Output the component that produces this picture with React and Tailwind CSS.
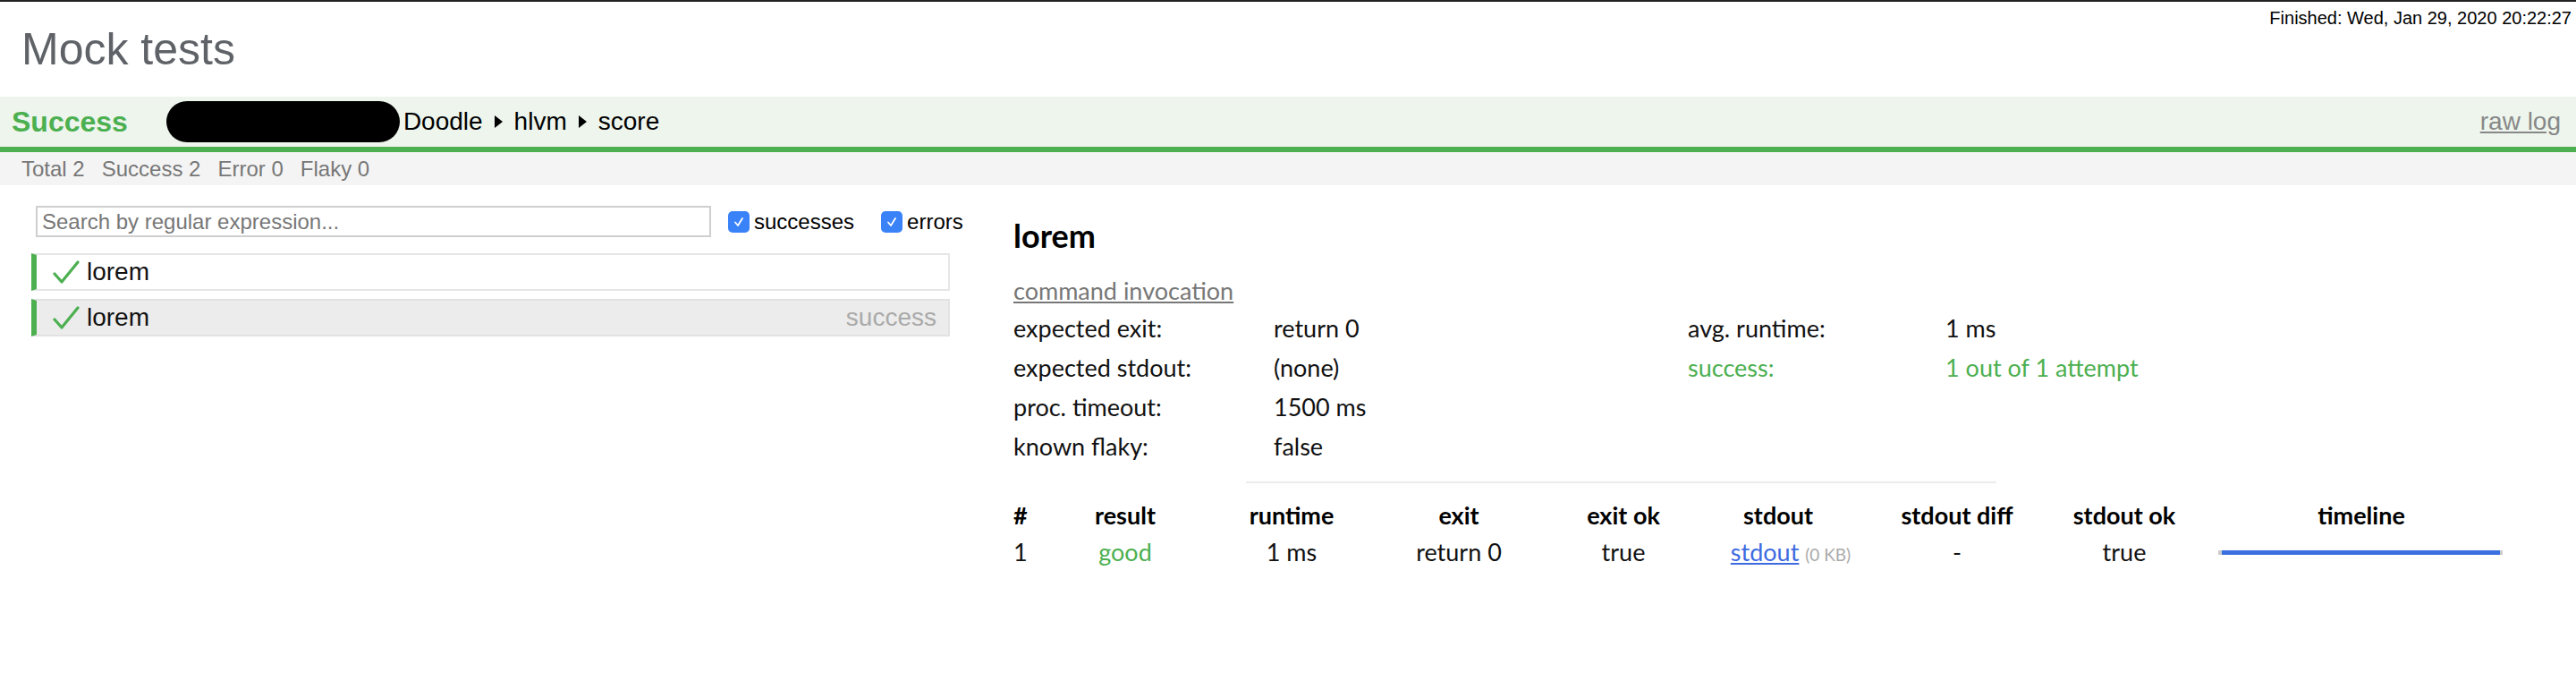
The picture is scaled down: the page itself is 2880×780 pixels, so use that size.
import React from 'react';

const GREEN = 'text-[#4caf50]';

const TickIcon = () => (
  <svg width="30" height="27" viewBox="0 0 30 27" fill="none">
    <path d="M2 15 L10 24 L28 2" stroke="#4caf50" strokeWidth="3.2" strokeLinecap="round" strokeLinejoin="round" />
  </svg>
);

const Caret = () => (
  <svg width="9" height="14" viewBox="0 0 9 14" className="mx-[13px]">
    <path d="M0 0 L9 7 L0 14 Z" fill="#000" />
  </svg>
);

const Checkbox = ({ label, className }) => (
  <label className={`flex items-center ${className || ''}`}>
    <span className="flex h-[24px] w-[24px] items-center justify-center rounded-[5px] bg-[#3a82f7]">
      <svg width="14" height="14" viewBox="0 0 14 14" fill="none">
        <path d="M3 7.5 L6 11 L11 3" stroke="#fff" strokeWidth="1.8" strokeLinecap="round" strokeLinejoin="round" />
      </svg>
    </span>
    <span className="ml-[5px] text-[24px] leading-[28px] text-black">{label}</span>
  </label>
);

const TestRow = ({ name, status, selected }) => (
  <div
    className={`flex h-[42px] w-[1027px] items-center border-2 border-l-[6px] border-l-[#4caf50] pl-[18px] pr-[13px] ${
      selected ? 'border-[#e2e2e2] bg-[#ececec]' : 'border-[#e6e6e6] bg-white'
    }`}
  >
    <TickIcon />
    <span className="ml-[8px] text-[28px] leading-[32px] text-[#111]">{name}</span>
    {status && <span className="ml-auto text-[28px] leading-[32px] text-[#aaa]">{status}</span>}
  </div>
);

const infoRows = [
  ['expected exit:', 'return 0', 'avg. runtime:', '1 ms', false],
  ['expected stdout:', '(none)', 'success:', '1 out of 1 attempt', true],
  ['proc. timeout:', '1500 ms', '', '', false],
  ['known flaky:', 'false', '', '', false],
];

const columns = ['#', 'result', 'runtime', 'exit', 'exit ok', 'stdout', 'stdout diff', 'stdout ok', 'timeline'];

export default function App() {
  return (
    <div className="min-h-[780px] w-[2880px] border-t-2 border-[#222] bg-white font-['Liberation_Sans',Arial,sans-serif]">
      {/* title */}
      <div className="relative h-[106px]">
        <h1 className="pl-[24px] pt-[24px] text-[50px] leading-[58px] text-[#5f6368]">Mock tests</h1>
        <div className="absolute right-[5px] top-[6px] text-[20px] leading-[24px] text-black">
          Finished: Wed, Jan 29, 2020 20:22:27
        </div>
      </div>

      {/* status bar */}
      <div className="flex h-[62px] items-center border-b-[6px] border-[#4caf50] bg-[#edf5ed] pl-[13px] pr-[17px]">
        <span className={`text-[32px] font-bold leading-[36px] ${GREEN}`}>Success</span>
        <span className="ml-[43px] h-[46px] w-[261px] rounded-full bg-black" />
        <div className="ml-[4px] flex items-center text-[28px] leading-[32px] text-black">
          <span>Doodle</span>
          <Caret />
          <span>hlvm</span>
          <Caret />
          <span>score</span>
        </div>
        <a className="ml-auto text-[28px] leading-[32px] text-[#888] underline">raw log</a>
      </div>

      {/* counters */}
      <div className="flex h-[37px] items-center gap-[19px] bg-[#f4f4f4] pl-[24px] text-[24px] leading-[28px] text-[#777]">
        <span>Total 2</span>
        <span>Success 2</span>
        <span>Error 0</span>
        <span>Flaky 0</span>
      </div>

      <div className="flex">
        {/* test list */}
        <div className="w-[1133px] shrink-0 pl-[35px] pt-[23px]">
          <div className="flex items-center">
            <div className="ml-[5px] flex h-[35px] w-[755px] items-center border-2 border-[#cfcfcf] pl-[5px] text-[24px] text-[#777]">
              Search by regular expression...
            </div>
            <Checkbox label="successes" className="ml-[19px]" />
            <Checkbox label="errors" className="ml-[30px]" />
          </div>
          <div className="mt-[18px] flex flex-col gap-[9px]">
            <TestRow name="lorem" />
            <TestRow name="lorem" status="success" selected />
          </div>
        </div>

        {/* details */}
        <div className="flex-1 pt-[34px] font-['Lato',sans-serif] text-[#111]">
          <h2 className="text-[36px] font-bold leading-[44px] text-black">lorem</h2>
          <a className="mt-[20px] block w-fit text-[27px] leading-[40px] text-[#777] underline">command invocation</a>
          <div className="grid grid-cols-[291px_463px_288px_auto] text-[27px] leading-[44px]">
            {infoRows.map(([k1, v1, k2, v2, ok], i) => (
              <React.Fragment key={i}>
                <span>{k1}</span>
                <span>{v1}</span>
                <span className={ok ? GREEN : ''}>{k2}</span>
                <span className={ok ? GREEN : ''}>{v2}</span>
              </React.Fragment>
            ))}
          </div>
          <div className="ml-[260px] mt-[17px] h-[2px] w-[839px] bg-[#ececec]" />
          <div className="mt-[15px] grid grid-cols-[32px_186px_186px_188px_180px_166px_234px_140px_390px] text-[27px]">
            {columns.map((c, i) => (
              <span key={c} className={`h-[42px] whitespace-nowrap font-bold leading-[42px] text-black ${i === 0 ? 'text-left' : 'text-center'}`}>
                {c}
              </span>
            ))}
            <span className="leading-[40px]">1</span>
            <span className={`text-center leading-[40px] ${GREEN}`}>good</span>
            <span className="text-center leading-[40px]">1 ms</span>
            <span className="text-center leading-[40px]">return 0</span>
            <span className="text-center leading-[40px]">true</span>
            <span className="whitespace-nowrap pl-[28px] text-center leading-[40px]">
              <a className="text-[#3d6ae0] underline">stdout</a>{' '}
              <span className="text-[19px] text-[#aaa]">(0 KB)</span>
            </span>
            <span className="text-center leading-[40px]">-</span>
            <span className="text-center leading-[40px]">true</span>
            <div className="flex h-[40px] items-center pl-[35px]">
              <div className="flex h-[5px] w-[318px]">
                <span className="w-[4px] bg-[#cccccc]" />
                <span className="flex-1 bg-[#3a6fe0]" />
                <span className="w-[3px] bg-[#cccccc]" />
              </div>
            </div>
          </div>
        </div>
      </div>
    </div>
  );
}
